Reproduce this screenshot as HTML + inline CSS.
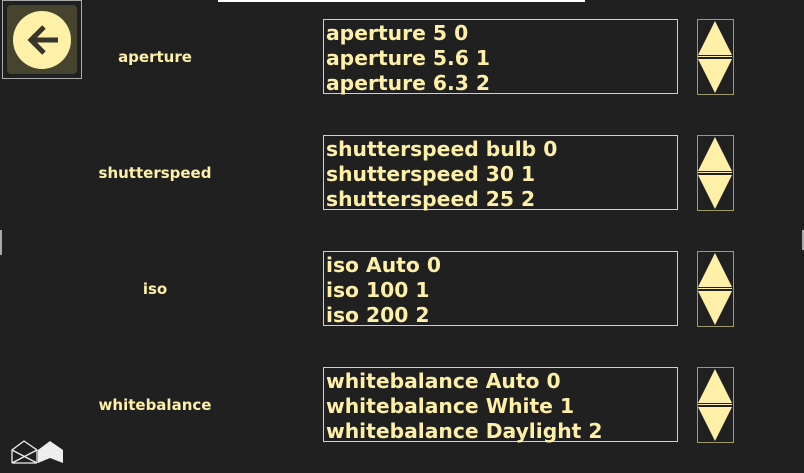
<!DOCTYPE html>
<html><head><style>
body{margin:0;width:804px;height:473px;background:#202020;position:relative;overflow:hidden;font-family:"DejaVu Sans","Liberation Sans",sans-serif;font-weight:bold;color:#fff0a8}
.lab{position:absolute;width:200px;left:55px;text-align:center;font-size:15px}
.box{position:absolute;left:323px;width:351px;border:1.5px solid #d0d0d0;font-size:20.3px;line-height:25px;padding-top:1px;height:72px;padding-left:2px;white-space:nowrap}
</style></head><body>
<div style="position:absolute;left:218px;top:0;width:367px;height:2px;background:#fff"></div>
<div style="position:absolute;left:2px;top:0;width:78px;height:77px;border:1.5px solid #aaa;"></div>
<div style="position:absolute;left:7px;top:5px;width:70px;height:69px;border-radius:4px;background:#46442f"></div>
<svg style="position:absolute;left:12px;top:10px" width="60" height="60"><circle cx="30" cy="30" r="29" fill="#fff0a8"/><path d="M46 30H18M32 17L19 30L32 43" stroke="#36352a" stroke-width="5" fill="none"/></svg>
<div style="position:absolute;left:0;top:230px;width:2px;height:25px;background:#aaa"></div>
<div style="position:absolute;left:802px;top:230px;width:2px;height:20px;background:#aaa"></div>

<div class="lab" style="top:48px">aperture</div>
<div class="box" style="top:19px">aperture 5 0<br>aperture 5.6 1<br>aperture 6.3 2</div>
<div class="lab" style="top:164px">shutterspeed</div>
<div class="box" style="top:135px">shutterspeed bulb 0<br>shutterspeed 30 1<br>shutterspeed 25 2</div>
<div class="lab" style="top:280px">iso</div>
<div class="box" style="top:251px">iso Auto 0<br>iso 100 1<br>iso 200 2</div>
<div class="lab" style="top:396px">whitebalance</div>
<div class="box" style="top:367px">whitebalance Auto 0<br>whitebalance White 1<br>whitebalance Daylight 2</div>

<svg style="position:absolute;left:697px;top:19px" width="38" height="77"><rect x="0.5" y="0.5" width="36" height="75" fill="none" stroke="#a09a6a"/><path d="M18 2L35 36H1Z M1 40H35L18 74Z" fill="#fff0a8"/><path d="M1 37.5H35" stroke="#fff0a8"/></svg>
<svg style="position:absolute;left:697px;top:135px" width="38" height="77"><rect x="0.5" y="0.5" width="36" height="75" fill="none" stroke="#a09a6a"/><path d="M18 2L35 36H1Z M1 40H35L18 74Z" fill="#fff0a8"/><path d="M1 37.5H35" stroke="#fff0a8"/></svg>
<svg style="position:absolute;left:697px;top:251px" width="38" height="77"><rect x="0.5" y="0.5" width="36" height="75" fill="none" stroke="#a09a6a"/><path d="M18 2L35 36H1Z M1 40H35L18 74Z" fill="#fff0a8"/><path d="M1 37.5H35" stroke="#fff0a8"/></svg>
<svg style="position:absolute;left:697px;top:367px" width="38" height="77"><rect x="0.5" y="0.5" width="36" height="75" fill="none" stroke="#a09a6a"/><path d="M18 2L35 36H1Z M1 40H35L18 74Z" fill="#fff0a8"/><path d="M1 37.5H35" stroke="#fff0a8"/></svg>

<svg style="position:absolute;left:11px;top:439px" width="56" height="26"><path d="M1 24V11L13 2L26 11V24M1 24L26 11M1 11L26 24M1 24H26" stroke="#eee" stroke-width="1.3" fill="none"/><path d="M27 11L39 2L52 11L39 19Z M39 19L52 11V24Z M27 11L39 19L27 24Z" fill="#eee"/></svg>
</body></html>
